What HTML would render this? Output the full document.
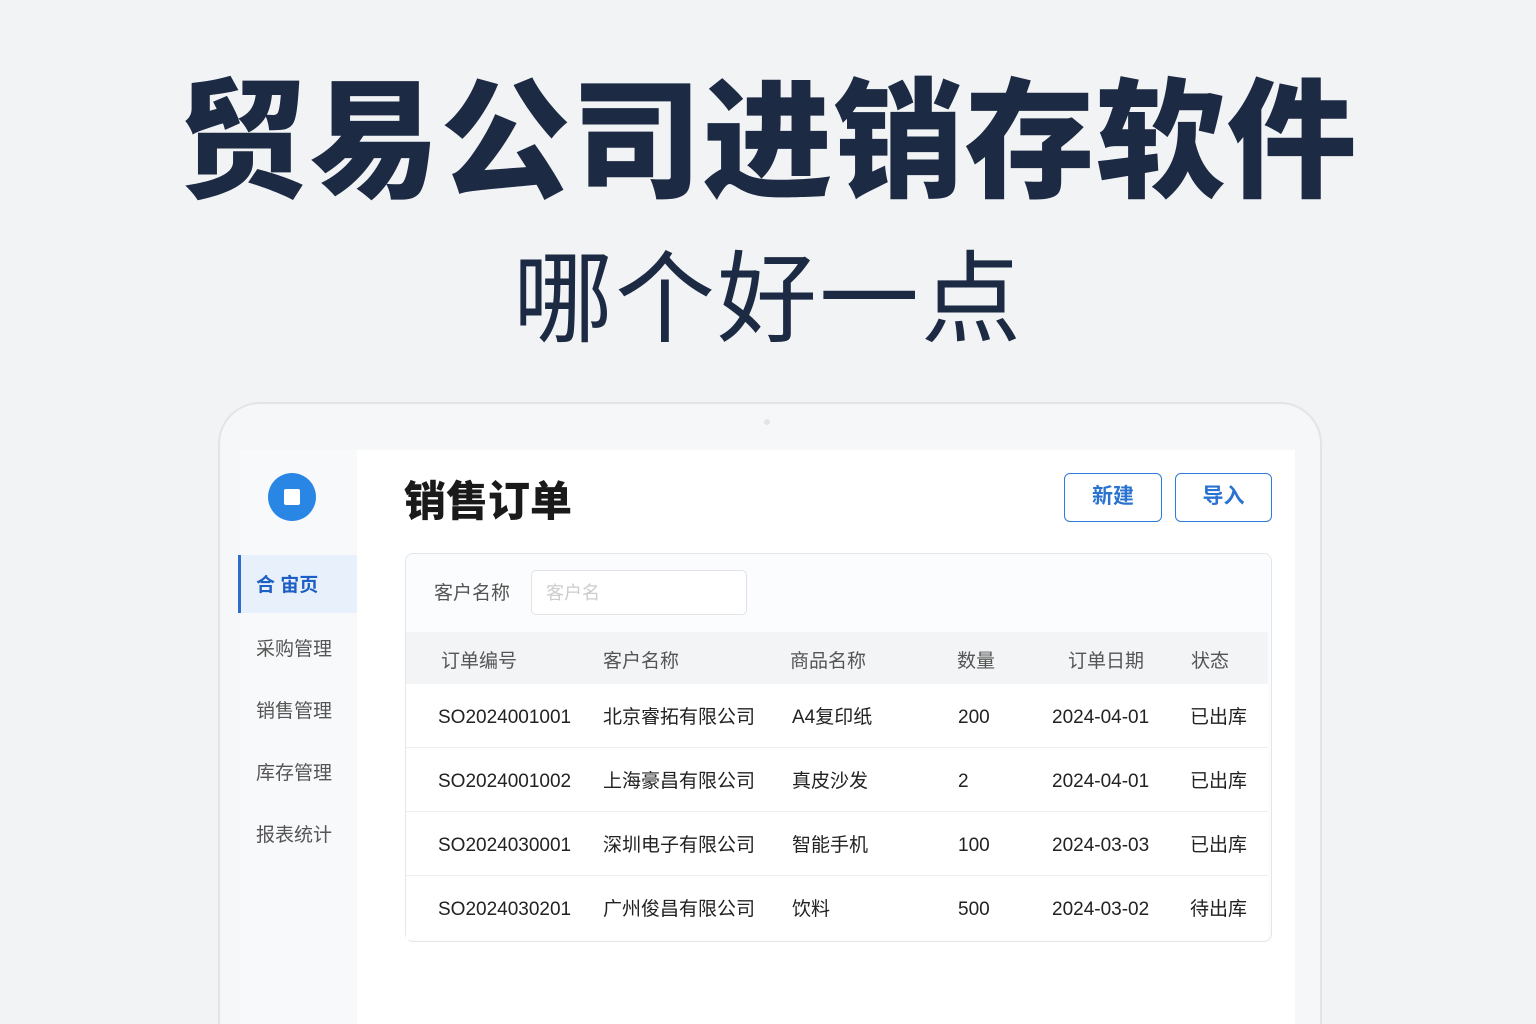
<!DOCTYPE html>
<html style="width:1536px;height:1024px;overflow:hidden"><head><meta charset="utf-8"><style>
*{margin:0;padding:0;box-sizing:border-box}
body{width:1536px;height:1024px;overflow:hidden;background:#f1f3f5;font-family:"Liberation Sans","Noto Sans CJK SC",sans-serif;position:relative;color:#222}
.a{position:absolute;white-space:nowrap;line-height:24px}
.t1{left:0;width:1536px;text-align:center;top:62px;font-size:130px;font-weight:900;color:#1c2a44;letter-spacing:1px;line-height:160px!important}
.t2{left:0;width:1536px;text-align:center;top:245px;font-size:100px;font-weight:400;color:#1c2a44;letter-spacing:2px;line-height:110px!important}
.dev{left:218px;top:402px;width:1104px;height:622px;border:2px solid #e2e4e7;border-bottom:none;border-radius:42px 42px 0 0;background:#f6f7f8}
.side{left:240px;top:450px;width:117px;height:574px;background:#f8f9fa}
.main{left:357px;top:450px;width:938px;height:574px;background:#fff}
.nav{left:256px;font-size:19px;color:#555}
.btn{top:473px;height:49px;border:1.5px solid #2f7ad8;border-radius:6px;color:#2a72d0;font-size:21px;font-weight:bold;text-align:center;line-height:46px!important;background:#fff}
.card{left:405px;top:553px;width:867px;height:389px;border:1px solid #e3e5e8;border-radius:8px;background:#fbfcfd}
.row{left:406px;width:862px;height:64px;border-bottom:1px solid #eceef0;background:#fff}
.c{font-size:19px;color:#222}
.h{font-size:19px;color:#555;top:650px}
</style></head><body>
<div class="a t1">贸易公司进销存软件</div>
<div class="a t2">哪个好一点</div>
<div class="a dev"></div>
<div class="a" style="left:764px;top:419px;width:6px;height:6px;border-radius:3px;background:#e2e4e6"></div>
<div class="a side"></div>
<div class="a main"></div>
<div class="a" style="left:268px;top:473px;width:48px;height:48px;border-radius:50%;background:#2a86e4"></div>
<div class="a" style="left:284px;top:489px;width:16px;height:16px;background:#fff;border-radius:2px"></div>
<div class="a" style="left:238px;top:555px;width:119px;height:58px;background:#e7f0fb;border-left:3px solid #2a6fcf"></div>
<div class="a" style="left:256px;top:574px;font-size:19px;font-weight:bold;color:#1d5fc4">合 宙页</div>
<div class="a nav" style="top:638px">采购管理</div>
<div class="a nav" style="top:700px">销售管理</div>
<div class="a nav" style="top:762px">库存管理</div>
<div class="a nav" style="top:824px">报表统计</div>
<div class="a" style="left:404px;top:478px;font-size:42px;font-weight:900;color:#1a1a1a;line-height:48px">销售订单</div>
<div class="a btn" style="left:1064px;width:98px">新建</div>
<div class="a btn" style="left:1175px;width:97px">导入</div>
<div class="a card"></div>
<div class="a" style="left:434px;top:582px;font-size:19px;color:#555">客户名称</div>
<div class="a" style="left:531px;top:570px;width:216px;height:45px;border:1px solid #e0e2e5;border-radius:5px;background:#fff;font-size:18px;color:#ccc;padding:10px 14px">客户名</div>
<div class="a" style="left:406px;top:632px;width:862px;height:52px;background:#f2f4f6"></div>
<div class="a h" style="left:441px">订单编号</div>
<div class="a h" style="left:603px">客户名称</div>
<div class="a h" style="left:790px">商品名称</div>
<div class="a h" style="left:957px">数量</div>
<div class="a h" style="left:1068px">订单日期</div>
<div class="a h" style="left:1191px">状态</div>
<div class="a row" style="top:684px"></div>
<div class="a row" style="top:748px"></div>
<div class="a row" style="top:812px"></div>
<div class="a row" style="top:876px;border-bottom:none"></div>
<div class="a c" style="left:438px;top:706px">SO2024001001</div><div class="a c" style="left:603px;top:706px">北京睿拓有限公司</div><div class="a c" style="left:792px;top:706px">A4复印纸</div><div class="a c" style="left:958px;top:706px">200</div><div class="a c" style="left:1052px;top:706px">2024-04-01</div><div class="a c" style="left:1190px;top:706px">已出库</div>
<div class="a c" style="left:438px;top:770px">SO2024001002</div><div class="a c" style="left:603px;top:770px">上海豪昌有限公司</div><div class="a c" style="left:792px;top:770px">真皮沙发</div><div class="a c" style="left:958px;top:770px">2</div><div class="a c" style="left:1052px;top:770px">2024-04-01</div><div class="a c" style="left:1190px;top:770px">已出库</div>
<div class="a c" style="left:438px;top:834px">SO2024030001</div><div class="a c" style="left:603px;top:834px">深圳电子有限公司</div><div class="a c" style="left:792px;top:834px">智能手机</div><div class="a c" style="left:958px;top:834px">100</div><div class="a c" style="left:1052px;top:834px">2024-03-03</div><div class="a c" style="left:1190px;top:834px">已出库</div>
<div class="a c" style="left:438px;top:898px">SO2024030201</div><div class="a c" style="left:603px;top:898px">广州俊昌有限公司</div><div class="a c" style="left:792px;top:898px">饮料</div><div class="a c" style="left:958px;top:898px">500</div><div class="a c" style="left:1052px;top:898px">2024-03-02</div><div class="a c" style="left:1190px;top:898px">待出库</div>
</body></html>
